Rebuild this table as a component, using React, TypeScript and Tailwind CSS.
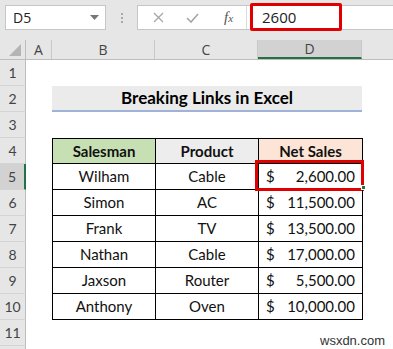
import type { ReactNode } from 'react'

const CELL_FONT = { fontFamily: 'Lato, "Open Sans", sans-serif' }

const ROWS = [
  { name: 'Wilham', product: 'Cable', sales: '2,600.00' },
  { name: 'Simon', product: 'AC', sales: '11,500.00' },
  { name: 'Frank', product: 'TV', sales: '13,500.00' },
  { name: 'Nathan', product: 'Cable', sales: '17,000.00' },
  { name: 'Jaxson', product: 'Router', sales: '5,500.00' },
  { name: 'Anthony', product: 'Oven', sales: '10,000.00' },
]

function RowHead({ n, active }: { n?: number; active?: boolean }) {
  return (
    <div
      className={
        'w-[26px] shrink-0 flex items-center justify-center text-[14px] text-[#444] border-b border-[#d4d4d4] ' +
        (active
          ? 'bg-[#d2d2d2] border-r-2 border-r-[#217346]'
          : 'bg-[#e6e6e6] border-r border-r-[#bdbdbd]')
      }
    >
      {n}
    </div>
  )
}

function SheetRow({ n, active, children }: { n?: number; active?: boolean; children?: ReactNode }) {
  return (
    <div className="flex h-[26px]">
      <RowHead n={n} active={active} />
      <div className="w-[26px] shrink-0" />
      {children}
      <div className="flex-1" />
    </div>
  )
}

export default function App() {
  return (
    <div className="relative w-[393px] h-[349px] overflow-hidden bg-white" style={{ fontFamily: '"Open Sans", "Noto Sans", sans-serif' }}>
      {/* formula bar */}
      <div className="h-[40px] bg-[#e6e6e6] flex items-start pt-[5px] pl-[5px]">
        <div className="w-[101px] h-[25px] bg-white border border-[#c6c6c6] flex items-center justify-between pl-[7px] pr-[6px]">
          <span className="text-[14px] text-[#222]">D5</span>
          <svg width="9" height="5" viewBox="0 0 9 5">
            <path d="M0 0h9L4.5 5z" fill="#777" />
          </svg>
        </div>
        <div className="w-[31px] h-[25px] flex flex-col items-center justify-center gap-[2px]">
          <span className="w-[2px] h-[2px] bg-[#a8a8a8]" />
          <span className="w-[2px] h-[2px] bg-[#a8a8a8]" />
          <span className="w-[2px] h-[2px] bg-[#a8a8a8]" />
        </div>
        <div className="flex-1 h-[25px] bg-white border border-[#c6c6c6] border-r-0 flex items-center relative">
          <div className="w-[108px] h-full flex items-center">
            <svg className="ml-[15px]" width="11" height="11" viewBox="0 0 11 11">
              <path d="M1 1l9 9M10 1l-9 9" stroke="#a6a6a6" strokeWidth="1.3" />
            </svg>
            <svg className="ml-[22px]" width="13" height="10" viewBox="0 0 13 10">
              <path d="M1 5l4 4 7-8" stroke="#a6a6a6" strokeWidth="1.6" fill="none" />
            </svg>
            <span className="ml-[25px] text-[#555] italic text-[15px] leading-none" style={{ fontFamily: '"Liberation Serif", serif' }}>
              f<span className="text-[11px]">x</span>
            </span>
          </div>
          <div className="w-px h-full bg-[#dcdcdc]" />
          <div className="pl-[15px] text-[15px] text-[#222]">2600</div>
          <div className="absolute left-[112px] top-[-3px] w-[92px] h-[28px] border-[3px] border-[#e00000] rounded-[2px]" />
        </div>
      </div>

      {/* column headers */}
      <div className="flex h-[20px] bg-[#e6e6e6] border-b border-[#bdbdbd] text-[14px] text-[#444]">
        <div className="w-[26px] shrink-0 border-r border-[#bdbdbd] flex items-end justify-end pr-[4px] pb-[3px]">
          <svg width="12" height="12" viewBox="0 0 12 12">
            <path d="M12 0v12H0z" fill="#b4b4b4" />
          </svg>
        </div>
        <div className="w-[26px] shrink-0 border-r border-[#c8c8c8] flex items-center justify-center">A</div>
        <div className="w-[103px] shrink-0 border-r border-[#c8c8c8] flex items-center justify-center">B</div>
        <div className="w-[103px] shrink-0 border-r border-[#c8c8c8] flex items-center justify-center">C</div>
        <div className="w-[104px] shrink-0 bg-[#d2d2d2] border-b-2 border-[#217346] border-r border-r-[#c8c8c8] flex items-center justify-center">D</div>
        <div className="flex-1" />
      </div>

      {/* sheet */}
      <div className="text-[15px] text-[#111]" style={CELL_FONT}>
        <SheetRow n={1} />
        <SheetRow n={2}>
          <div className="w-[310px] shrink-0 bg-[#ebebeb] border-b-2 border-[#9fb3d9] flex items-center justify-center font-bold text-[17px] text-black">
            Breaking Links in Excel
          </div>
        </SheetRow>
        <SheetRow n={3} />
        <SheetRow n={4}>
          <div className="w-[104px] shrink-0 bg-[#c6e0b4] border border-black flex items-center justify-center font-bold">Salesman</div>
          <div className="w-[103px] shrink-0 bg-[#ededed] border-y border-r border-black flex items-center justify-center font-bold">Product</div>
          <div className="w-[104px] shrink-0 bg-[#fce4d6] border-y border-r border-black flex items-center justify-center font-bold">Net Sales</div>
        </SheetRow>
        {ROWS.map((r, i) => (
          <SheetRow key={r.name} n={5 + i} active={i === 0}>
            <div className="w-[104px] shrink-0 border-x border-b border-black flex items-center justify-center">{r.name}</div>
            <div className="w-[103px] shrink-0 border-r border-b border-black flex items-center justify-center">{r.product}</div>
            <div className="relative w-[104px] shrink-0 border-r border-b border-black flex items-center justify-between pl-[7px] pr-[7px]">
              <span>$</span>
              <span>{r.sales}</span>
              {i === 0 && (
                <>
                  <div className="absolute -left-[4px] -top-[4px] -right-[2px] -bottom-[2px] border-[3px] border-[#e00000]" />
                  <div className="absolute right-[-4px] bottom-[-1px] w-[5px] h-[5px] bg-[#217346] border border-white" />
                </>
              )}
            </div>
          </SheetRow>
        ))}
        <SheetRow n={11} />
        <SheetRow />
      </div>

      <div className="absolute left-[320px] top-[331px] text-[13px] text-[#333]" style={{ fontFamily: '"Liberation Sans", Arial, sans-serif' }}>
        wsxdn.com
      </div>
    </div>
  )
}
